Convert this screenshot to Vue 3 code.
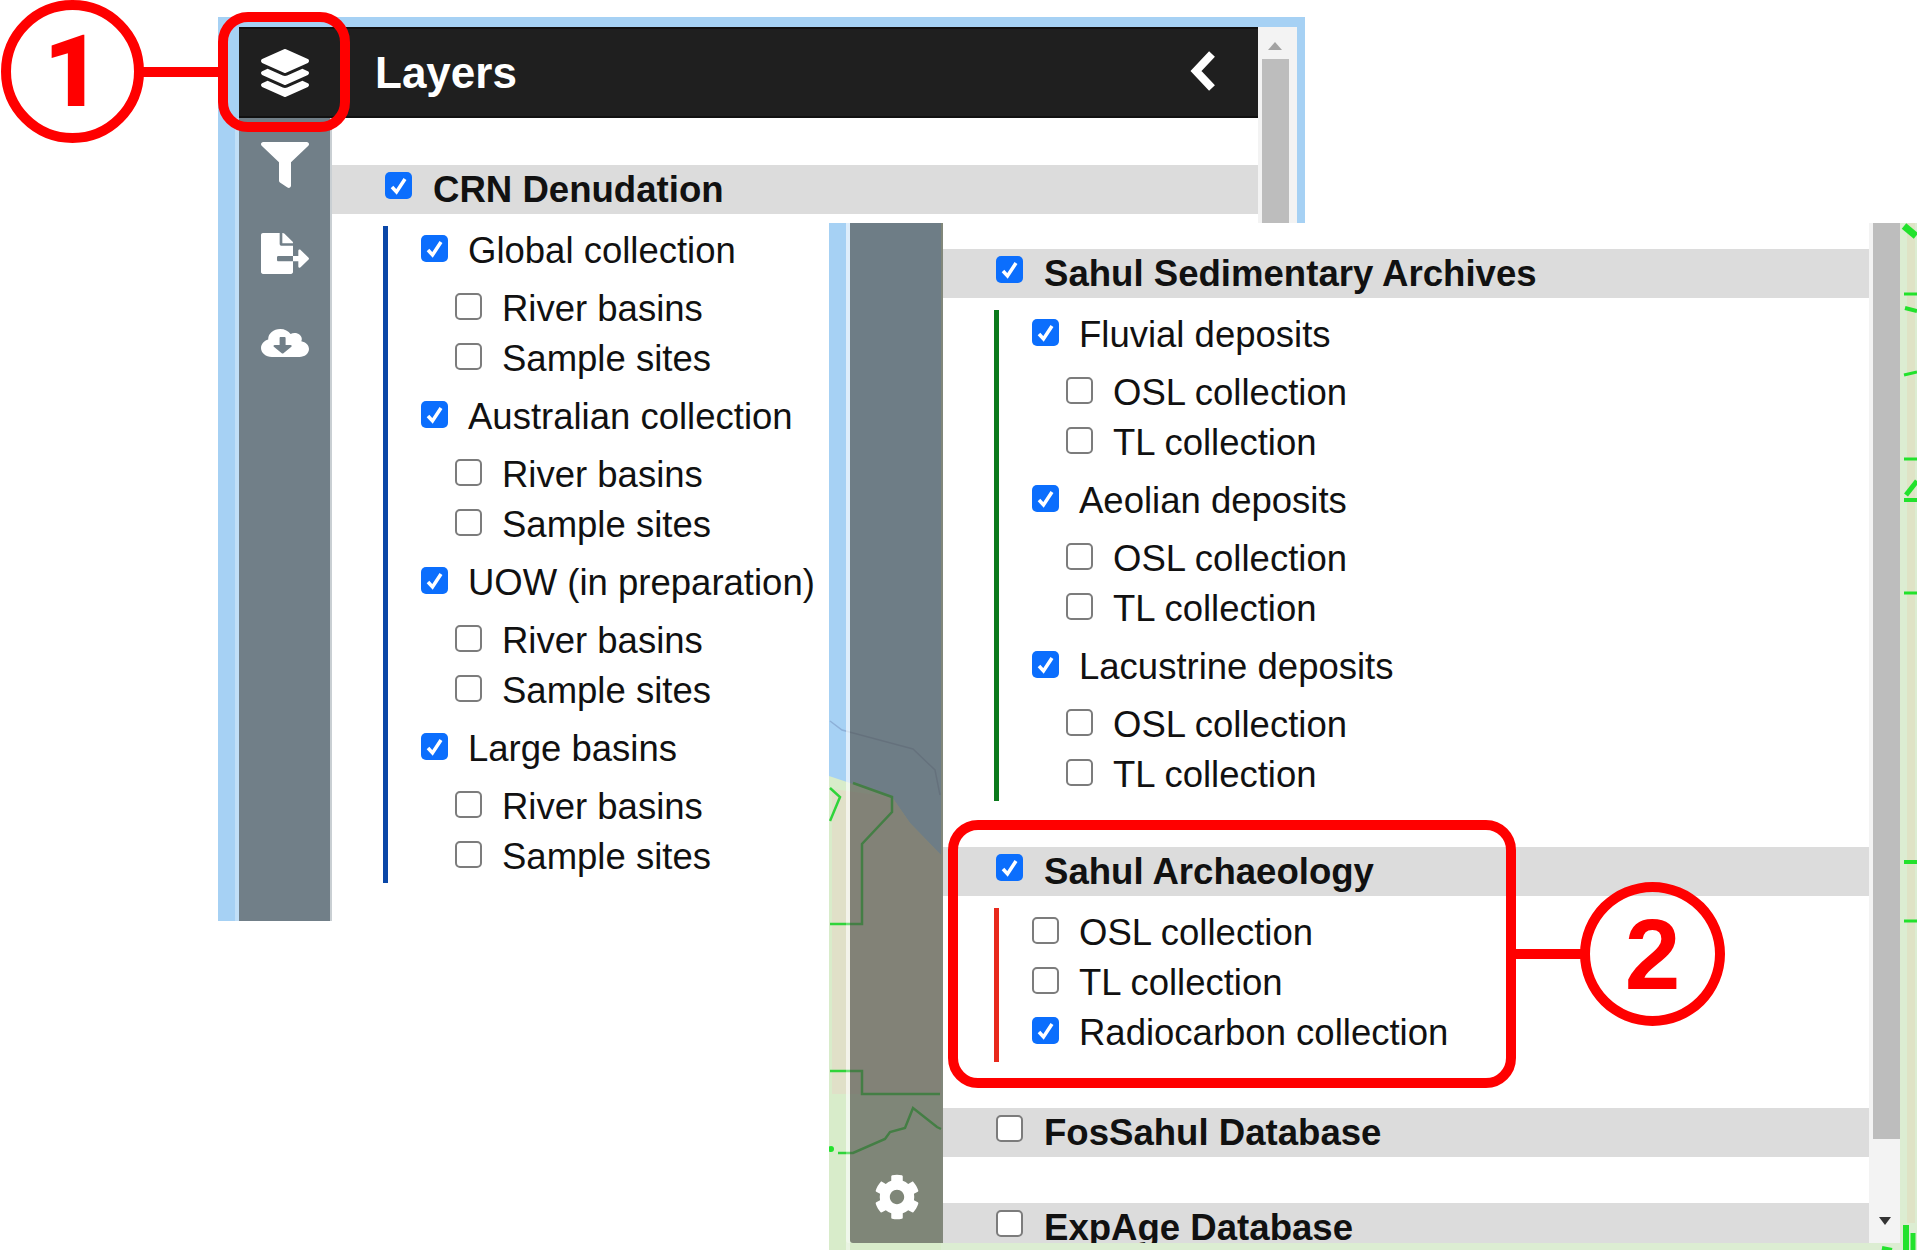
<script setup>
const sub = (...names) => names.map((label) => ({ label, checked: false }))

const crnGroups = [
  { label: 'Global collection', checked: true, children: sub('River basins', 'Sample sites') },
  { label: 'Australian collection', checked: true, children: sub('River basins', 'Sample sites') },
  { label: 'UOW (in preparation)', checked: true, children: sub('River basins', 'Sample sites') },
  { label: 'Large basins', checked: true, children: sub('River basins', 'Sample sites') }
]

const sections = [
  {
    title: 'Sahul Sedimentary Archives',
    checked: true,
    color: '#0b7a1c',
    groups: [
      { label: 'Fluvial deposits', checked: true, children: sub('OSL collection', 'TL collection') },
      { label: 'Aeolian deposits', checked: true, children: sub('OSL collection', 'TL collection') },
      { label: 'Lacustrine deposits', checked: true, children: sub('OSL collection', 'TL collection') }
    ]
  },
  {
    title: 'Sahul Archaeology',
    checked: true,
    color: '#e8291c',
    flat: true,
    groups: [
      { label: 'OSL collection', checked: false, children: [] },
      { label: 'TL collection', checked: false, children: [] },
      { label: 'Radiocarbon collection', checked: true, children: [] }
    ]
  },
  { title: 'FosSahul Database', checked: false, groups: [] },
  { title: 'ExpAge Database', checked: false, groups: [] }
]

// map visible behind the second window, in window coordinates
const mapLines = [
  '1,565 11,574 1,598',
  '24,560 63,574 63,589 33,621 33,701 1,701',
  '1,848 33,848 33,871 111,871',
  '9,930 24,930 56,916 61,909 76,905 84,885 108,904 112,906'
]

const edgeMarks = [
  { points: '4,3 16,13', width: 7 },
  { points: '4,71 17,71', width: 3 },
  { points: '5,85 17,88', width: 4 },
  { points: '4,152 17,149', width: 3 },
  { points: '4,236 17,236', width: 3 },
  { points: '4,277 17,277', width: 4 },
  { points: '6,272 17,258', width: 5 },
  { points: '4,370 17,370', width: 3 },
  { points: '4,639 17,639', width: 4 },
  { points: '4,698 17,698', width: 3 },
  { points: '6,1002 6,1027', width: 6 },
  { points: '13,1010 13,1027', width: 5 },
  { points: '-18,1025 -8,1027', width: 4 }
]
</script>

<template>
  <div class="page">
    <!-- first window: CRN layers -->
    <section class="window window-one">
      <div class="window-body">
        <header class="titlebar">
          <span class="titlebar-icon">
            <svg viewBox="0 0 512 512" class="icon"><path d="M12.41 148.02l232.94 105.67c6.8 3.09 14.49 3.09 21.29 0l232.94-105.67c16.55-7.51 16.55-32.52 0-40.03L266.65 2.31a25.607 25.607 0 0 0-21.29 0L12.41 107.98c-16.55 7.51-16.55 32.53 0 40.04zm487.18 88.28l-58.09-26.33-161.64 73.27c-7.56 3.43-15.59 5.17-23.86 5.17s-16.29-1.74-23.86-5.17L70.51 209.97l-58.1 26.33c-16.55 7.5-16.55 32.5 0 40l232.94 105.59c6.8 3.08 14.49 3.08 21.29 0L499.59 276.3c16.55-7.5 16.55-32.5 0-40zm0 127.8l-57.87-26.23-161.86 73.37c-7.56 3.43-15.59 5.17-23.86 5.17s-16.29-1.74-23.86-5.17L70.29 337.87 12.41 364.1c-16.55 7.5-16.55 32.5 0 40l232.94 105.59c6.8 3.08 14.49 3.08 21.29 0L499.59 404.1c16.55-7.5 16.55-32.5 0-40z"/></svg>
          </span>
          <h1 class="titlebar-text">Layers</h1>
          <svg class="chevron" viewBox="0 0 27 42"><polyline points="22,4 6,21 22,38" /></svg>
        </header>
        <div class="window-row">
          <nav class="sidebar">
            <svg viewBox="0 0 512 512" class="icon icon-filter" preserveAspectRatio="none"><path d="M487.976 0H24.028C2.71 0-8.047 25.866 7.058 40.971L192 225.941V432c0 7.831 3.821 15.17 10.237 19.662l80 55.98C298.02 518.69 320 507.493 320 487.98V225.941l184.947-184.97C520.021 25.896 509.338 0 487.976 0z"/></svg>
            <svg viewBox="0 0 576 512" class="icon icon-file" preserveAspectRatio="none"><path d="M384 121.9c0-6.3-2.5-12.4-7-16.9L279.1 7c-4.5-4.5-10.6-7-17-7H256v128h128zM571 308l-95.7-96.4c-10.1-10.1-27.4-3-27.4 11.3V288h-64v64h64v65.2c0 14.3 17.3 21.4 27.4 11.3L571 332c6.6-6.6 6.6-17.4 0-24zm-379 28v-32c0-8.8 7.2-16 16-16h176V160H248c-13.2 0-24-10.8-24-24V0H24C10.7 0 0 10.7 0 24v464c0 13.3 10.7 24 24 24h336c13.3 0 24-10.7 24-24V352H208c-8.8 0-16-7.2-16-16z"/></svg>
            <svg viewBox="0 0 640 512" class="icon icon-cloud" preserveAspectRatio="none"><path d="M537.6 226.6c4.1-10.7 6.4-22.4 6.4-34.6 0-53-43-96-96-96-19.7 0-38.1 6-53.3 16.2C367 64.2 315.3 32 256 32c-88.4 0-160 71.6-160 160 0 2.7.1 5.4.2 8.1C40.2 219.8 0 273.2 0 336c0 79.5 64.5 144 144 144h368c70.7 0 128-57.3 128-128 0-61.9-44-113.6-102.4-125.4zm-132.9 88.7L299.3 420.7c-6.2 6.2-16.4 6.2-22.6 0L171.3 315.3c-10.1-10.1-2.9-27.3 11.3-27.3H248V176c0-8.8 7.2-16 16-16h48c8.8 0 16 7.2 16 16v112h65.4c14.2 0 21.4 17.2 11.3 27.3z"/></svg>
          </nav>
          <div class="layers layers-one">
            <div class="band">
              <span class="box checked box-head"><svg viewBox="0 0 27 27"><polyline points="7,15 11.5,20 20,7" /></svg></span>
              <span class="band-text">CRN Denudation</span>
            </div>
            <div class="tree" style="border-color: #0a47a8">
              <div v-for="group in crnGroups" :key="group.label" class="group">
                <label class="row">
                  <span class="box" :class="{ checked: group.checked }"><svg v-if="group.checked" viewBox="0 0 27 27"><polyline points="7,15 11.5,20 20,7" /></svg></span>
                  {{ group.label }}
                </label>
                <div class="children">
                  <label v-for="child in group.children" :key="child.label" class="row">
                    <span class="box"></span>
                    {{ child.label }}
                  </label>
                </div>
              </div>
            </div>
          </div>
        </div>
      </div>
      <div class="scrollbar scrollbar-one">
        <span class="arrow-up"></span>
        <span class="thumb"></span>
      </div>
    </section>

    <!-- second window: the rest of the same list, scrolled down -->
    <section class="window window-two">
      <svg class="map" viewBox="0 0 1088 1027" width="1088" height="1027">
        <rect x="0" y="0" width="112" height="1027" fill="#a6d1f4" />
        <polygon points="0,553 24,561 63,574 81,600 112,632 112,1027 0,1027" fill="#d8ecca" />
        <polygon points="3,566 63,574 81,600 112,632 112,871 3,871" fill="#e0e0c8" />
        <polyline class="river" points="1,498 13,507 84,526 106,547 111,572" />
        <rect x="17" y="0" width="4" height="1027" fill="#fff" fill-opacity="0.45" />
        <polyline v-for="line in mapLines" :key="line" class="boundary" :points="line" />
        <circle cx="2" cy="926" r="3" fill="#22e22c" />
        <g transform="translate(1071 0)">
          <rect x="7" y="0" width="8" height="1000" fill="#dfe3c6" />
          <polyline v-for="mark in edgeMarks" :key="mark.points" class="mark" :points="mark.points" :stroke-width="mark.width" />
        </g>
      </svg>
      <div class="window-row window-row-two">
        <nav class="sidebar sidebar-two">
          <svg viewBox="0 0 512 512" class="icon icon-gear"><path d="M487.4 315.7l-42.6-24.6c4.3-23.2 4.3-47 0-70.2l42.6-24.6c4.9-2.8 7.1-8.6 5.5-14-11.1-35.6-30-67.8-54.7-94.6-3.8-4.1-10-5.1-14.8-2.3L380.8 110c-17.9-15.4-38.5-27.3-60.8-35.1V25.8c0-5.6-3.9-10.5-9.4-11.7-36.7-8.2-74.3-7.8-109.2 0-5.5 1.2-9.4 6.1-9.4 11.7V75c-22.2 7.9-42.8 19.8-60.8 35.1L88.7 85.5c-4.9-2.8-11-1.9-14.8 2.3-24.7 26.7-43.6 58.9-54.7 94.6-1.7 5.4.6 11.2 5.5 14L67.3 221c-4.3 23.2-4.3 47 0 70.2l-42.6 24.6c-4.9 2.8-7.1 8.6-5.5 14 11.1 35.6 30 67.8 54.7 94.6 3.8 4.1 10 5.1 14.8 2.3l42.6-24.6c17.9 15.4 38.5 27.3 60.8 35.1v49.2c0 5.6 3.9 10.5 9.4 11.7 36.7 8.2 74.3 7.8 109.2 0 5.5-1.2 9.4-6.1 9.4-11.7v-49.2c22.2-7.9 42.8-19.8 60.8-35.1l42.6 24.6c4.9 2.8 11 1.9 14.8-2.3 24.7-26.7 43.6-58.9 54.7-94.6 1.5-5.5-.7-11.3-5.6-14.1zM256 336c-44.1 0-80-35.9-80-80s35.9-80 80-80 80 35.9 80 80-35.9 80-80 80z"/></svg>
        </nav>
        <div class="layers layers-two">
          <div v-for="section in sections" :key="section.title" class="section">
            <div class="band">
              <span class="box box-head" :class="{ checked: section.checked }"><svg v-if="section.checked" viewBox="0 0 27 27"><polyline points="7,15 11.5,20 20,7" /></svg></span>
              <span class="band-text">{{ section.title }}</span>
            </div>
            <div v-if="section.groups.length" class="tree" :class="{ flat: section.flat }" :style="{ borderColor: section.color }">
              <div v-for="group in section.groups" :key="group.label" :class="{ group: group.children.length }">
                <label class="row">
                  <span class="box" :class="{ checked: group.checked }"><svg v-if="group.checked" viewBox="0 0 27 27"><polyline points="7,15 11.5,20 20,7" /></svg></span>
                  {{ group.label }}
                </label>
                <div v-if="group.children.length" class="children">
                  <label v-for="child in group.children" :key="child.label" class="row">
                    <span class="box"></span>
                    {{ child.label }}
                  </label>
                </div>
              </div>
            </div>
          </div>
        </div>
        <div class="scrollbar scrollbar-two">
          <span class="thumb"></span>
          <span class="arrow-down"></span>
        </div>
      </div>
    </section>

    <!-- red callouts drawn over the screenshots -->
    <div class="callout-ring ring-one">1</div>
    <div class="callout-line line-one"></div>
    <div class="callout-box box-one"></div>
    <div class="callout-ring ring-two">2</div>
    <div class="callout-line line-two"></div>
    <div class="callout-box box-two"></div>
  </div>
</template>

<style scoped>
.page {
  position: relative;
  width: 1917px;
  height: 1250px;
  overflow: hidden;
  background: #fff;
  font-family: "Liberation Sans", Arial, sans-serif;
  color: #111;
}

.window {
  position: absolute;
  display: flex;
  overflow: hidden;
}

.window-one {
  left: 218px;
  top: 17px;
  width: 1087px;
  height: 904px;
  padding: 10px 8px 0 21px;
  box-sizing: border-box;
  background: #a6d1f4;
}

.window-body {
  flex: 1;
  display: flex;
  flex-direction: column;
  min-width: 0;
}

.titlebar {
  display: flex;
  align-items: center;
  height: 91px;
  flex-shrink: 0;
  background: #1f1f1f;
  border-top: 2px solid #111;
  border-bottom: 2px solid #111;
  box-sizing: border-box;
  color: #fff;
}

.titlebar-icon {
  display: flex;
  justify-content: center;
  width: 91px;
  flex-shrink: 0;
}

.titlebar-text {
  margin: 0 0 0 45px;
  flex: 1;
  font-size: 44px;
  font-weight: 700;
  line-height: 1;
}

.chevron {
  width: 27px;
  height: 42px;
  margin: 0 41px 4px 0;
  fill: none;
  stroke: #fff;
  stroke-width: 8;
}

.icon {
  display: block;
  width: 48px;
  height: 48px;
  fill: #fff;
}

.window-row {
  flex: 1;
  display: flex;
  min-height: 0;
}

.sidebar {
  width: 93px;
  flex-shrink: 0;
  display: flex;
  flex-direction: column;
  align-items: center;
  padding-top: 24px;
  box-sizing: border-box;
  background: #717f88;
  border-right: 2px solid #c9cfd3;
  box-shadow: -4px 0 0 rgba(255, 255, 255, 0.3);
}

.icon-filter {
  height: 46px;
}

.icon-file {
  height: 41px;
  margin-top: 45px;
}

.icon-cloud {
  height: 32px;
  margin-top: 53px;
}

.layers {
  flex: 1;
  min-width: 0;
  background: #fff;
  overflow: hidden;
}

.layers-one {
  padding-top: 47px;
}

.band {
  display: flex;
  align-items: center;
  height: 49px;
  padding-left: 53px;
  background: #dcdcdc;
  box-sizing: border-box;
}

.band-text {
  margin-left: 21px;
  font-size: 36.6px;
  font-weight: 700;
  white-space: nowrap;
}

.box {
  position: relative;
  top: -3px;
  width: 27px;
  height: 27px;
  flex-shrink: 0;
  box-sizing: border-box;
  background: #fff;
  border: 2px solid #7c7c7c;
  border-radius: 5px;
}

.box-head {
  top: -4px;
}

.box.checked {
  background: #0b6efd;
  border: 0;
}

.box svg {
  display: block;
  width: 27px;
  height: 27px;
  fill: none;
  stroke: #fff;
  stroke-width: 3.5;
}

.tree {
  margin: 12px 0 0 51px;
  padding: 0 0 1px 33px;
  border-left: 5px solid;
}

.tree.flat {
  padding-bottom: 4px;
}

.group + .group {
  margin-top: 8px;
}

.children {
  margin-top: 8px;
  padding-left: 34px;
}

.row {
  display: flex;
  align-items: center;
  gap: 20px;
  height: 50px;
  font-size: 36.5px;
  white-space: nowrap;
}

.scrollbar {
  display: flex;
  flex-direction: column;
  align-items: flex-start;
  box-sizing: border-box;
  background: #f3f3f3;
}

.scrollbar-one {
  width: 39px;
  flex-shrink: 0;
  padding-left: 4px;
}

.scrollbar-one .arrow-up {
  margin: 15px 0 9px 6px;
  border-left: 7px solid transparent;
  border-right: 7px solid transparent;
  border-bottom: 8px solid #a3a3a3;
}

.thumb {
  display: block;
  flex-shrink: 0;
  width: 27px;
  background: #bdbdbd;
}

.scrollbar-one .thumb {
  height: 800px;
}

.window-two {
  left: 829px;
  top: 223px;
  width: 1088px;
  height: 1027px;
  padding: 0 17px 7px 21px;
  box-sizing: border-box;
  background: #dcedd2;
}

.map {
  position: absolute;
  left: 0;
  top: 0;
}

.map polyline {
  fill: none;
}

.map .river {
  stroke: #8db0d8;
  stroke-width: 1.5;
}

.map .boundary {
  stroke: #2fd43a;
  stroke-width: 2.5;
}

.map .mark {
  stroke: #22e22c;
}

.window-row-two {
  position: relative;
  height: 100%;
}

.sidebar-two {
  justify-content: flex-end;
  padding: 0 0 23px;
  background: rgba(80, 80, 75, 0.65);
  border-right: 0;
  border-bottom-left-radius: 3px;
}

.icon-gear {
  width: 46px;
  height: 46px;
}

.layers-two {
  padding-top: 26px;
}

.section + .section {
  margin-top: 46px;
}

.scrollbar-two {
  width: 31px;
  flex-shrink: 0;
  padding-left: 4px;
}

.scrollbar-two .thumb {
  height: 916px;
}

.arrow-down {
  margin: 78px 0 0 6px;
  border-left: 6px solid transparent;
  border-right: 6px solid transparent;
  border-top: 8px solid #333;
}

.callout-ring {
  position: absolute;
  display: flex;
  align-items: center;
  justify-content: center;
  box-sizing: border-box;
  border: 10px solid #f00;
  border-radius: 50%;
  color: #f00;
  font-size: 100px;
  font-weight: 700;
  line-height: 1;
}

.ring-one {
  left: 1px;
  top: 0;
  width: 143px;
  height: 143px;
  font-family: Roboto, "Liberation Sans", sans-serif;
  font-weight: 900;
}

.ring-two {
  left: 1580px;
  top: 882px;
  width: 145px;
  height: 144px;
}

.callout-line {
  position: absolute;
  height: 10px;
  background: #f00;
}

.line-one {
  left: 142px;
  top: 67px;
  width: 78px;
}

.line-two {
  left: 1514px;
  top: 949px;
  width: 68px;
}

.callout-box {
  position: absolute;
  box-sizing: border-box;
  border: 10px solid #f00;
  border-radius: 30px;
}

.box-one {
  left: 218px;
  top: 12px;
  width: 132px;
  height: 120px;
}

.box-two {
  left: 948px;
  top: 820px;
  width: 568px;
  height: 268px;
}
</style>
